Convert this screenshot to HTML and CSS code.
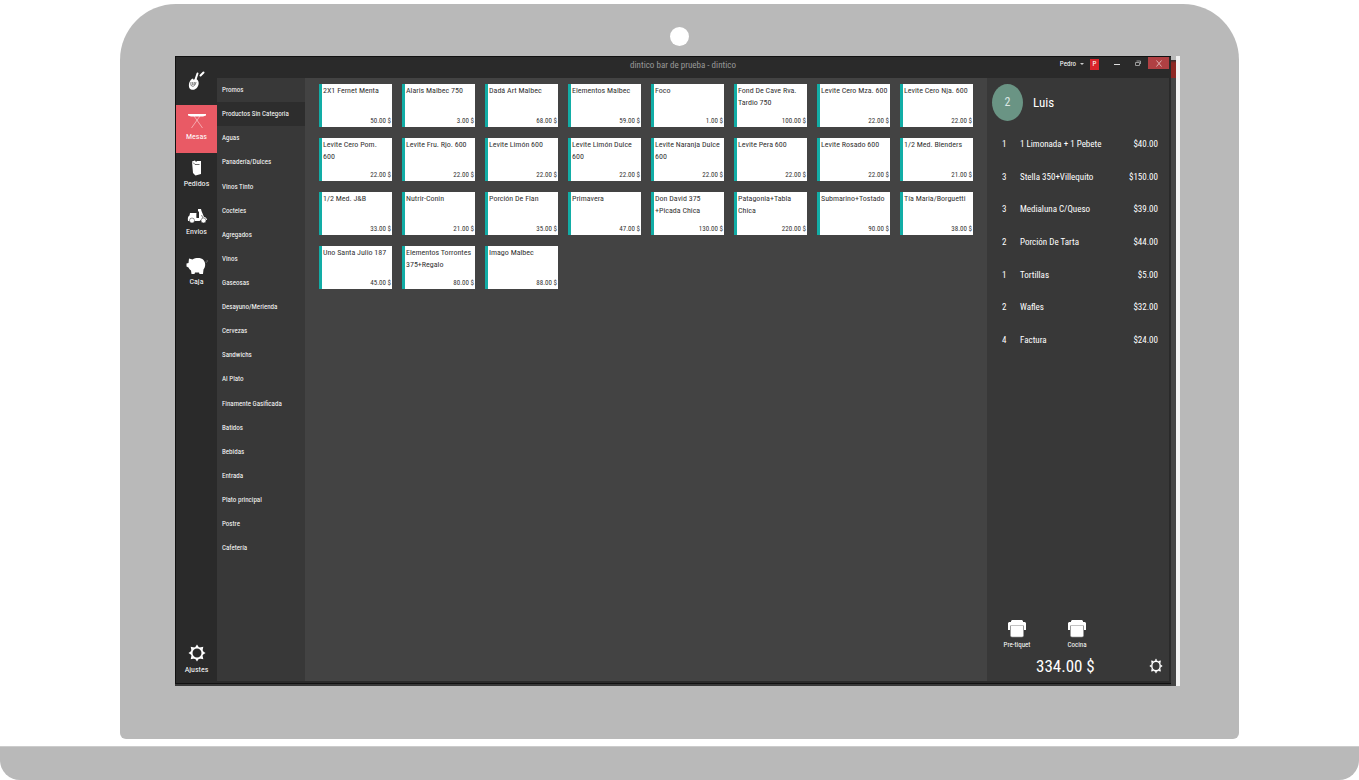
FILE: index.html
```html
<!DOCTYPE html>
<html lang="es">
<head>
<meta charset="utf-8">
<title>dintico bar de prueba - dintico</title>
<link rel="stylesheet" href="styles.css">
</head>
<body>
<svg class="defs" width="0" height="0" aria-hidden="true">
  <symbol id="gear" viewBox="0 0 20 20">
    <g fill="currentColor"><path d="M8 3.500L10 .5l2 3zM8 16.500l2 3 2-3zM3.500 8L.5 10l3 2zM16.500 8l3 2-3 2zM3.800 7L3 3l4 .8zM13 3.800L17 3l-.8 4zM3.800 13L3 17l4-.8zM13 16.200l4 .8-.8-4z"/></g>
    <circle cx="10" cy="10" r="6" fill="none" stroke="currentColor" stroke-width="2"/>
  </symbol>
  <symbol id="printer" viewBox="0 0 18 18">
    <path fill="#fff" d="M3 1l1-1h10l1 1v1h2l1 1v7h-2V6H2v4H0V3l1-1h2z"/>
    <path fill="#fff" stroke="#999" stroke-width=".6" d="M2.500 5.500h13V16l-1 1h-11l-1-1z"/>
  </symbol>
</svg>
<div class="laptop">
  <div class="lid">
    <span class="camera"></span>
    <div class="bezel">
    <div class="app">
      <nav class="rail">
        <a class="brand" href="#" aria-label="dintico"><svg width="17" height="20" viewBox="0 0 17 20"><path fill="#fff" d="M8 8c3 1 3.500 5 1.500 8-2 3.200-6 3.800-8 1.200C0 14 1.500 8.500 5 7.500l.5 1.200z"/><path fill="none" stroke="#2a2a2a" stroke-width=".6" d="M3 11c-.5 3 0 4 1.500 4.200S7.500 14 8 11M4.700 11v3M6.400 11L6 14"/><path fill="none" stroke="#fff" stroke-width="2" stroke-linecap="round" d="M7 10L9.500 2.500M12.500 4.500L15.500 1.500"/></svg></a>
        <a class="tab active" href="#"><svg width="20" height="16" viewBox="0 0 20 16"><path fill="#fff" d="M1 1h18v1.500l-3 1H4l-3-1z"/><path fill="none" stroke="#fff" stroke-opacity=".6" stroke-width=".8" d="M7 3l8.500 12M13 3L4.500 15"/></svg><span>Mesas</span></a>
        <a class="tab" href="#"><svg width="20" height="16" viewBox="0 0 20 16"><path fill="#fff" d="M5 1.500l3-1 1 1.500 1-1h4V14l-5.500 1.500L6 13z"/><path stroke="#2a2a2a" stroke-width=".7" fill="none" d="M6 2.500l2 2h4.500"/></svg><span>Pedidos</span></a>
        <a class="tab" href="#"><svg width="20" height="16" viewBox="0 0 20 16"><path fill="#fff" d="M3 5h6.500v5H12V4l-1-1V1h3l.5 2L17 9c2 0 3 2 3 3h-6L12.500 13H1c-.5-3 0-4.500 1.500-5.500z"/><path stroke="#2a2a2a" stroke-width=".6" d="M10 5.500v4M14.500 7l1.500 3"/><g fill="#fff" stroke="#2a2a2a" stroke-width=".5"><circle cx="5" cy="12.500" r="2.500"/><circle cx="16.500" cy="12.500" r="2.500"/></g></svg><span>Envios</span></a>
        <a class="tab" href="#"><svg class="pig" width="22" height="17" viewBox="0 0 22 17"><path fill="#fff" d="M3 1.500l3.500 1C10 .5 15 .5 17.500 3c2.500 3 2 7 0 9.500L17 17h-3.500l-.5-1.500H9L8.500 17H5.500L5 13.500C3.500 12.500 3 11.500 2.500 10.500L.5 9.500V6.500L2.500 6z"/><path stroke="#888" stroke-width=".7" fill="none" d="M19.500 5c2 1 2-1 1.500-2"/></svg><span>Caja</span></a>
        <a class="tab settings" href="#"><svg width="18" height="18"><use href="#gear"/></svg><span>Ajustes</span></a>
      </nav>
      <div class="window">
        <header class="titlebar">
          <h1>dintico bar de prueba - dintico</h1>
          <div class="controls">
            <button class="user" type="button">Pedro <i></i><b>P</b></button>
            <button type="button" aria-label="Minimizar"><svg width="6" height="8"><path fill="#ddd" d="M0 5h6v1H0z"/></svg></button>
            <button type="button" aria-label="Restaurar"><svg width="6" height="7"><path fill="none" stroke="#999" d="M.5 2.500h4v3h-4zM1.500 1h4v3"/></svg></button>
            <button class="close" type="button" aria-label="Cerrar"><svg width="6" height="7"><path fill="none" stroke="#ddb0b0" d="M.5 .5l5 6M5.500 .5l-5 6"/></svg></button>
          </div>
        </header>
        <div class="body">
          <ul class="categories">
            <li><a href="#">Promos</a></li><li><a class="selected" href="#">Productos Sin Categoria</a></li><li><a href="#">Aguas</a></li><li><a href="#">Panadería/Dulces</a></li><li><a href="#">Vinos Tinto</a></li><li><a href="#">Cocteles</a></li><li><a href="#">Agregados</a></li><li><a href="#">Vinos</a></li><li><a href="#">Gaseosas</a></li><li><a href="#">Desayuno/Merienda</a></li><li><a href="#">Cervezas</a></li><li><a href="#">Sandwichs</a></li><li><a href="#">Al Plato</a></li><li><a href="#">Finamente Gasificada</a></li><li><a href="#">Batidos</a></li><li><a href="#">Bebidas</a></li><li><a href="#">Entrada</a></li><li><a href="#">Plato principal</a></li><li><a href="#">Postre</a></li><li><a href="#">Cafetería</a></li>
          </ul>
          <main class="products">
            <button type="button"><span>2X1 Fernet Menta</span><em>50.00 $</em></button>
            <button type="button"><span>Alaris Malbec 750</span><em>3.00 $</em></button>
            <button type="button"><span>Dadá Art Malbec</span><em>68.00 $</em></button>
            <button type="button"><span>Elementos Malbec</span><em>59.00 $</em></button>
            <button type="button"><span>Foco</span><em>1.00 $</em></button>
            <button type="button"><span>Fond De Cave Rva.<br>Tardio 750</span><em>100.00 $</em></button>
            <button type="button"><span>Levite Cero Mza. 600</span><em>22.00 $</em></button>
            <button type="button"><span>Levite Cero Nja. 600</span><em>22.00 $</em></button>
            <button type="button"><span>Levite Cero Pom.<br>600</span><em>22.00 $</em></button>
            <button type="button"><span>Levite Fru. Rjo. 600</span><em>22.00 $</em></button>
            <button type="button"><span>Levite Limón 600</span><em>22.00 $</em></button>
            <button type="button"><span>Levite Limón Dulce<br>600</span><em>22.00 $</em></button>
            <button type="button"><span>Levite Naranja Dulce<br>600</span><em>22.00 $</em></button>
            <button type="button"><span>Levite Pera 600</span><em>22.00 $</em></button>
            <button type="button"><span>Levite Rosado 600</span><em>22.00 $</em></button>
            <button type="button"><span>1/2 Med. Blenders</span><em>21.00 $</em></button>
            <button type="button"><span>1/2 Med. J&amp;B</span><em>33.00 $</em></button>
            <button type="button"><span>Nutrir-Conin</span><em>21.00 $</em></button>
            <button type="button"><span>Porción De Flan</span><em>35.00 $</em></button>
            <button type="button"><span>Primavera</span><em>47.00 $</em></button>
            <button type="button"><span>Don David 375<br>+Picada Chica</span><em>130.00 $</em></button>
            <button type="button"><span>Patagonia+Tabla<br>Chica</span><em>220.00 $</em></button>
            <button type="button"><span>Submarino+Tostado</span><em>90.00 $</em></button>
            <button type="button"><span>Tía Maria/Borguetti</span><em>38.00 $</em></button>
            <button type="button"><span>Uno Santa Julio 187</span><em>45.00 $</em></button>
            <button type="button"><span>Elementos Torrontes<br>375+Regalo</span><em>80.00 $</em></button>
            <button type="button"><span>Imago Malbec</span><em>88.00 $</em></button>
          </main>
          <aside class="order">
            <div class="guest"><span class="table-no">2</span><h2>Luis</h2></div>
            <table>
              <tr><td>1</td><td>1 Limonada + 1 Pebete</td><td>$40.00</td></tr>
              <tr><td>3</td><td>Stella 350+Villequito</td><td>$150.00</td></tr>
              <tr><td>3</td><td>Medialuna C/Queso</td><td>$39.00</td></tr>
              <tr><td>2</td><td>Porción De Tarta</td><td>$44.00</td></tr>
              <tr><td>1</td><td>Tortillas</td><td>$5.00</td></tr>
              <tr><td>2</td><td>Wafles</td><td>$32.00</td></tr>
              <tr><td>4</td><td>Factura</td><td>$24.00</td></tr>
            </table>
            <div class="print">
              <button type="button"><svg width="18" height="18"><use href="#printer"/></svg>Pre-tiquet</button>
              <button type="button"><svg width="18" height="18"><use href="#printer"/></svg>Cocina</button>
            </div>
            <div class="total"><strong>334.00 $</strong><button type="button" aria-label="Opciones"><svg width="14" height="16" viewBox="0 0 20 20" preserveAspectRatio="none"><use href="#gear" width="20" height="20"/></svg></button></div>
          </aside>
        </div>
      </div>
    </div>
    </div>
  </div>
  <div class="base"></div>
</div>
</body>
</html>
```
FILE: styles.css
```css
* { box-sizing: border-box; }
body { margin: 0; background: #fff; color: #fff; font: 8px/12px "Roboto Condensed", Roboto, sans-serif; }
a { color: inherit; text-decoration: none; }
button { font: inherit; color: inherit; background: none; border: 0; padding: 0; margin: 0; }
ul { list-style: none; margin: 0; padding: 0; }
h1, h2 { margin: 0; font-weight: 400; }
svg { display: block; }
.defs { position: absolute; }

.laptop { min-height: 100vh; display: flex; flex-direction: column; padding-top: 4px; }
.lid { flex: 1; display: flex; flex-direction: column; margin: 0 120px 7px; padding: 23px 0 53px; background: #b9b9b9; border-radius: 56px 56px 6px 6px; }
.camera { width: 19px; height: 19px; margin: 0 auto 10px; border-radius: 50%; background: #fff; }
.base { height: 34px; background: #b9b9b9; border-top: 1px solid #ccc; border-radius: 0 0 20px 20px; }

.bezel { flex: 1; display: flex; min-width: 0; margin: 0 59px 0 55px; padding: 0 5px 2px 0; border-right: 4px solid #f2f2f2; background: linear-gradient(#b9b9b9 4px, #303030 4px, #8e2824 7px, #8e2824 22px, #444 22px) right / 5px 100% no-repeat #383838; }
.app { flex: 1; display: flex; min-width: 0; background: #2a2a2a; border: solid #111; border-width: 1px 0 1px 1px; }
.rail { flex: 0 0 41px; display: flex; flex-direction: column; }
.brand { height: 48px; padding: 14px 0 0 12px; }
.tab { height: 48px; display: flex; flex-direction: column; align-items: center; gap: 2px; padding-top: 7px; }
.active { padding-top: 8px; background: #e95a65; }
.pig { margin-top: 1px; }
.settings { margin-top: auto; height: 43px; padding-top: 4px; }

.window { flex: 1; display: flex; flex-direction: column; min-width: 0; }
.titlebar { display: grid; grid-template-columns: 1fr auto 1fr; height: 21px; }
.titlebar h1 { grid-column: 2; margin-right: 22px; font-size: 9px; line-height: 16px; color: #999; }
.controls { display: flex; justify-content: flex-end; align-items: flex-start; margin-left: -22px; }
.controls button { width: 21px; height: 12px; display: flex; align-items: center; justify-content: center; }
.controls .user { width: auto; height: 14px; gap: 4px; margin-right: 7px; font-size: 7px; }
.user i { border: solid transparent; border-width: 2px 2px 0; border-top-color: #ccc; }
.user b { width: 9px; height: 11px; margin-left: 2px; line-height: 11px; background: #d9242a; font-weight: 400; }
.controls .close { background: #b04043; margin-right: 2px; }

.body { flex: 1; display: flex; min-width: 0; border-right: 2px solid #2a2a2a; margin-bottom: 2px; }
.categories { flex: 0 0 88px; display: grid; grid-template-rows: repeat(25, minmax(24px, 1fr)); background: #383838; font-size: 7px; }
.categories a { display: flex; align-items: center; height: 100%; padding-left: 5px; }
.categories .selected { background: #2d2d2d; }
.products { flex: 1; min-width: 0; display: grid; grid-template-columns: repeat(8, minmax(0, 1fr)); grid-auto-rows: 43px; align-content: start; gap: 11px 10px; padding: 6px 14px; background: #434343; }
.products button { display: flex; flex-direction: column; justify-content: space-between; text-align: left; color: #333; background: #fff; border-left: 3px solid #12ada6; padding: 1px; white-space: nowrap; }
.products em { align-self: flex-end; font-style: normal; font-size: 7px; line-height: 9px; }

.order { flex: 0 0 182px; display: flex; flex-direction: column; background: #383838; }
.guest { display: flex; align-items: center; gap: 10px; padding: 6px 5px 0; }
.table-no { width: 31px; height: 37px; border-radius: 50%; background: #6a9484; font-size: 12px; line-height: 37px; text-align: center; color: #dde8e4; }
.guest h2 { font-size: 13px; }
.order table { height: 228px; border-collapse: collapse; margin: 7px 11px 0 15px; font-size: 9px; }
.order td { padding: 0; }
.order td:first-child { width: 18px; }
.order td:last-child { text-align: right; }
.print { display: flex; gap: 20px; margin-top: auto; padding-left: 10px; font-size: 7px; }
.print button { width: 40px; display: flex; flex-direction: column; align-items: center; gap: 1px; }
.total { display: flex; align-items: center; justify-content: space-between; height: 30px; padding: 0 6px 0 49px; }
.total strong { font-size: 17px; font-weight: 400; }
```
